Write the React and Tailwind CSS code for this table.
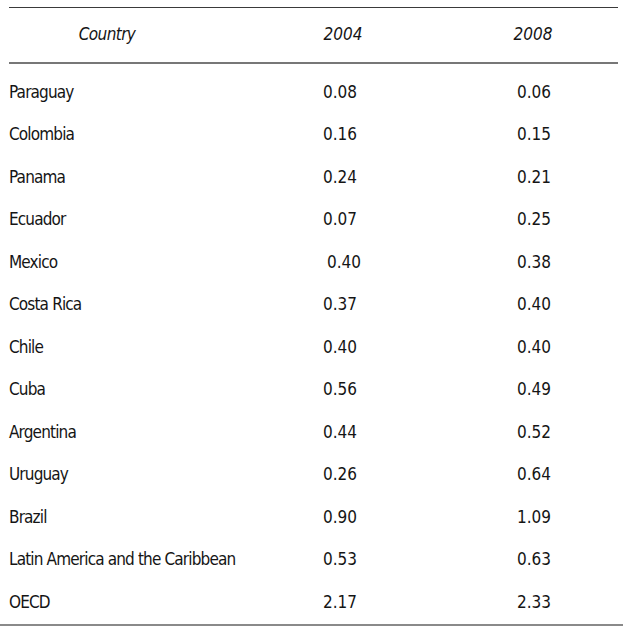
import React from 'react';

const rows = [
  ['Paraguay', '0.08', '0.06'],
  ['Colombia', '0.16', '0.15'],
  ['Panama', '0.24', '0.21'],
  ['Ecuador', '0.07', '0.25'],
  ['Mexico', '0.40', '0.38', true],
  ['Costa Rica', '0.37', '0.40'],
  ['Chile', '0.40', '0.40'],
  ['Cuba', '0.56', '0.49'],
  ['Argentina', '0.44', '0.52'],
  ['Uruguay', '0.26', '0.64'],
  ['Brazil', '0.90', '1.09'],
  ['Latin America and the Caribbean', '0.53', '0.63'],
  ['OECD', '2.17', '2.33'],
];

export default function App() {
  return (
    <div className="w-[623px] h-[632px] bg-white text-[#151515] pt-[7px] font-['Liberation_Sans_Narrow','DejaVu_Sans_Condensed',sans-serif] text-[17px]">
      {/* header */}
      <div className="ml-[9px] mr-[5px] border-t-[1.5px] border-[#3a3a3a]">
        <div className="flex items-center h-[56px] italic border-b-2 border-[#777]">
          <div className="w-[196px] text-center tracking-[-0.6px]">Country</div>
          <div className="ml-[108px] w-[60px] text-center">2004</div>
          <div className="ml-[130px] w-[60px] text-center">2008</div>
        </div>
      </div>

      {/* body */}
      <div className="pt-[7px] border-b-2 border-[#8a8a8a]">
        {rows.map(([name, a, b, shift]) => (
          <div key={name} className="flex items-center h-[42.5px]">
            <div className="pl-[9px] w-[323px] tracking-[-0.85px]">{name}</div>
            <div className={`w-[194px] ${shift ? 'pl-[4px]' : ''}`}>{a}</div>
            <div>{b}</div>
          </div>
        ))}
      </div>
    </div>
  );
}
